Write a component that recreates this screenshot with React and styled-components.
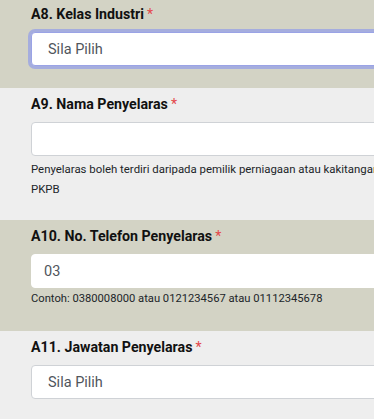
import React from 'react';
import styled, { createGlobalStyle } from 'styled-components';

const GlobalStyle = createGlobalStyle`
  html, body {
    margin: 0;
    padding: 0;
    overflow: hidden;
    background: #eeeeee;
  }
  body {
    font-family: Roboto, "Liberation Sans", sans-serif;
    color: #212529;
  }
`;

const StyledForm = styled.div`
  width: 640px;
`;

const StyledSection = styled.div`
  background-color: ${({ shaded }) => (shaded ? '#d3d3c5' : '#eeeeee')};
  padding-top: ${({ top }) => top || 7}px;
  padding-bottom: ${({ bottom }) => bottom || 22}px;
  padding-left: 31px;
`;

const StyledLabel = styled.div`
  font-size: 14.2px;
  line-height: 18px;
  font-weight: 700;
  color: #111111;
  margin-bottom: 9px;
`;

const StyledStar = styled.span`
  color: #e4474a;
  font-weight: 400;
  margin-left: 3px;
`;

const StyledField = styled.div`
  box-sizing: border-box;
  width: 100%;
  height: 34px;
  display: flex;
  align-items: center;
  background-color: #ffffff;
  border: 1px solid ${({ focused, borderless }) => (focused ? '#9aa3e6' : borderless ? '#ffffff' : '#cfd2d6')};
  border-radius: 4px;
  box-shadow: ${({ focused }) => (focused ? '0 0 0 3px rgba(150, 160, 230, 0.75)' : 'none')};
  padding-left: ${({ select }) => (select ? 16 : 12)}px;
  font-size: 14.5px;
  color: #50555c;
`;

const StyledHelp = styled.div`
  font-size: ${({ tall }) => (tall ? 11.4 : 11.2)}px;
  line-height: ${({ tall }) => (tall ? '20px' : '13px')};
  margin-top: ${({ tall }) => (tall ? 3 : 4)}px;
  color: #212529;
  white-space: nowrap;
`;

const App = () => (
  <StyledForm>
    <GlobalStyle />
    <StyledSection shaded top={5} bottom={22}>
      <StyledLabel>
        A8. Kelas Industri<StyledStar>*</StyledStar>
      </StyledLabel>
      <StyledField select focused>Sila Pilih</StyledField>
    </StyledSection>

    <StyledSection bottom={21}>
      <StyledLabel>
        A9. Nama Penyelaras<StyledStar>*</StyledStar>
      </StyledLabel>
      <StyledField />
      <StyledHelp tall>
        Penyelaras boleh terdiri daripada pemilik perniagaan atau kakitangan
        <br />
        PKPB
      </StyledHelp>
    </StyledSection>

    <StyledSection shaded bottom={26}>
      <StyledLabel>
        A10. No. Telefon Penyelaras<StyledStar>*</StyledStar>
      </StyledLabel>
      <StyledField borderless>03</StyledField>
      <StyledHelp>Contoh: 0380008000 atau 0121234567 atau 01112345678</StyledHelp>
    </StyledSection>

    <StyledSection bottom={30}>
      <StyledLabel>
        A11. Jawatan Penyelaras<StyledStar>*</StyledStar>
      </StyledLabel>
      <StyledField select>Sila Pilih</StyledField>
    </StyledSection>
  </StyledForm>
);

export default App;
